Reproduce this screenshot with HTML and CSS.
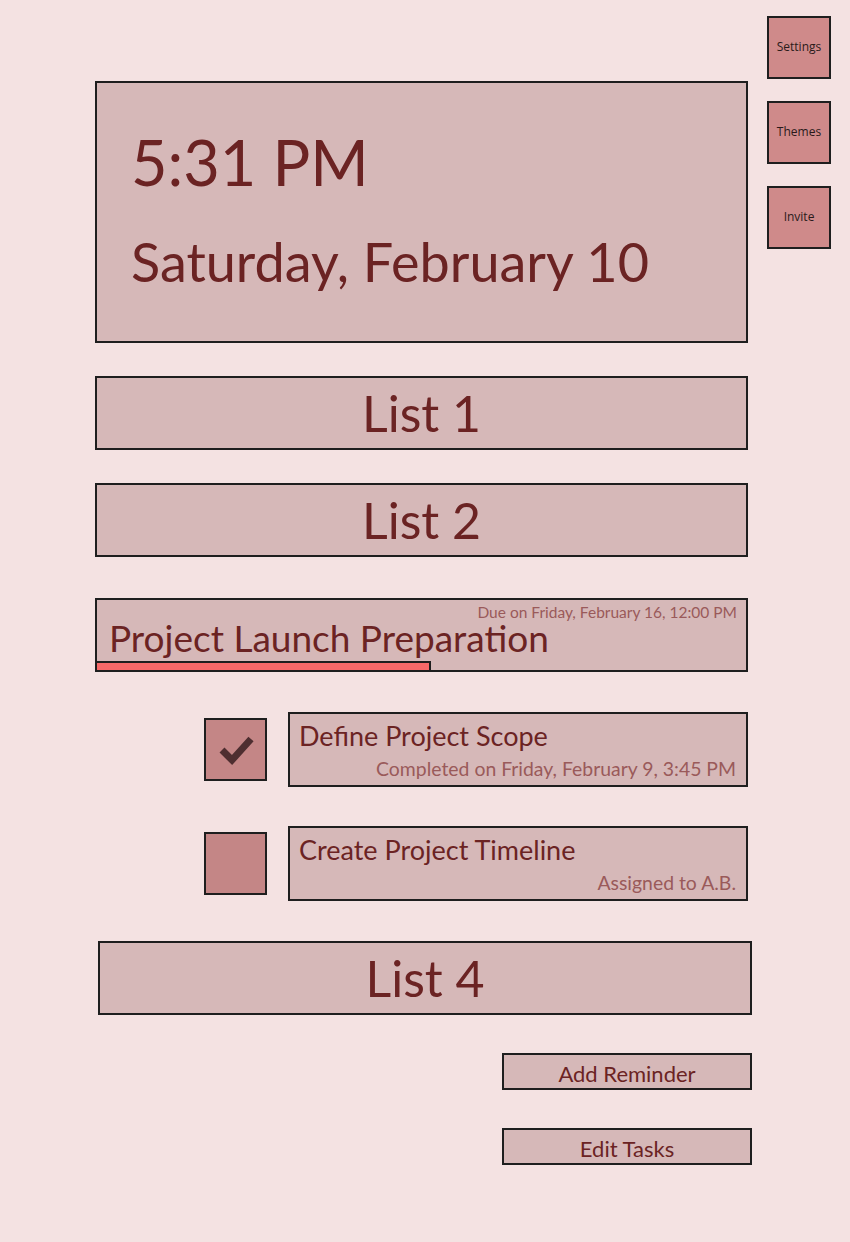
FILE: index.html
```html
<!DOCTYPE html>
<html>
<head>
<meta charset="utf-8">
<link rel="stylesheet" href="styles.css">
</head>
<body>
<div class="page">
  <main class="main">
    <section class="clock">
      <div class="time">5:31 PM</div>
      <div class="date">Saturday, February 10</div>
    </section>
    <div class="list list1">List 1</div>
    <div class="list list2">List 2</div>
    <div class="project">
      <div class="due">Due on Friday, February 16, 12:00 PM</div>
      <div class="ptitle">Project Launch Preparation</div>
      <div class="progress" style="width: 51.8%"></div>
    </div>
    <div class="task task1">
      <div class="check done">
        <svg viewBox="0 0 40 40" width="40" height="40"><polyline points="6,20 16,30 35,9" fill="none" stroke="#4e2e30" stroke-width="7"/></svg>
      </div>
      <div class="tbox">
        <div class="ttitle">Define Project Scope</div>
        <div class="tsub">Completed on Friday, February 9, 3:45 PM</div>
      </div>
    </div>
    <div class="task task2">
      <div class="check"></div>
      <div class="tbox">
        <div class="ttitle">Create Project Timeline</div>
        <div class="tsub">Assigned to A.B.</div>
      </div>
    </div>
    <div class="list list4">List 4</div>
    <div class="actions">
      <button class="act">Add Reminder</button>
      <button class="act">Edit Tasks</button>
    </div>
  </main>
  <aside class="side">
    <button class="sbtn">Settings</button>
    <button class="sbtn">Themes</button>
    <button class="sbtn">Invite</button>
  </aside>
</div>
</body>
</html>
```
FILE: styles.css
```css
* { box-sizing: border-box; }
html, body { margin: 0; padding: 0; }
body {
  background: #f4e2e2;
  font-family: Lato, "Open Sans", sans-serif;
  color: #6b2323;
  width: 850px;
  height: 1242px;
  overflow: hidden;
}
.page {
  display: flex;
  gap: 19px;
  padding-left: 95px;
}
.main {
  width: 653px;
  padding-top: 81px;
  display: flex;
  flex-direction: column;
}
.side {
  padding-top: 16px;
  display: flex;
  flex-direction: column;
  gap: 22px;
}
.sbtn {
  width: 64px;
  height: 63px;
  background: #cf8a8a;
  border: 2px solid #1e1e1e;
  font-family: "Open Sans", sans-serif;
  font-size: 12px;
  color: #2a1a1a;
  padding: 0 0 3px 0;
}
.clock {
  height: 262px;
  background: #d6b8b8;
  border: 2px solid #1e1e1e;
  padding: 40px 0 0 34px;
}
.time {
  font-size: 63px;
  line-height: 78px;
}
.date {
  font-size: 54px;
  line-height: 80px;
  margin-top: 21px;
}
.list {
  height: 74px;
  background: #d6b8b8;
  border: 2px solid #1e1e1e;
  text-align: center;
  font-size: 50px;
  line-height: 71px;
}
.list1 { margin-top: 33px; }
.list2 { margin-top: 33px; }
.project {
  margin-top: 41px;
  height: 74px;
  background: #d6b8b8;
  border: 2px solid #1e1e1e;
  position: relative;
}
.due {
  text-align: right;
  font-size: 15.5px;
  line-height: 20px;
  color: #9a5a5a;
  padding-right: 9px;
  padding-top: 2px;
}
.ptitle {
  font-size: 37px;
  line-height: 32px;
  padding-left: 12px;
}
.progress {
  position: absolute;
  left: -2px;
  bottom: -2px;
  height: 11px;
  background: #f66868;
  border: 2px solid #1e1e1e;
}
.task {
  display: flex;
  align-items: center;
  gap: 21px;
  padding-left: 109px;
}
.task1 { margin-top: 40px; }
.task2 { margin-top: 39px; }
.check {
  width: 63px;
  height: 63px;
  background: #c48686;
  border: 2px solid #1e1e1e;
  display: flex;
  align-items: center;
  justify-content: center;
}
.tbox {
  flex: 1;
  height: 75px;
  background: #d6b8b8;
  border: 2px solid #1e1e1e;
  padding: 6px 10px 0 9px;
}
.ttitle {
  font-size: 27px;
  line-height: 32px;
}
.tsub {
  text-align: right;
  font-size: 19.4px;
  line-height: 28px;
  margin-top: 3px;
  color: #9a5a5a;
}
.list4 {
  margin-top: 40px;
  margin-left: 3px;
  width: 654px;
}
.actions {
  display: flex;
  flex-direction: column;
  align-items: flex-end;
  gap: 38px;
  margin-top: 38px;
  margin-right: -4px;
}
.act {
  width: 250px;
  height: 37px;
  background: #d6b8b8;
  border: 2px solid #1e1e1e;
  font-family: Lato, sans-serif;
  font-size: 22px;
  color: #6b2323;
  padding: 4px 0 0 0;
}
```
